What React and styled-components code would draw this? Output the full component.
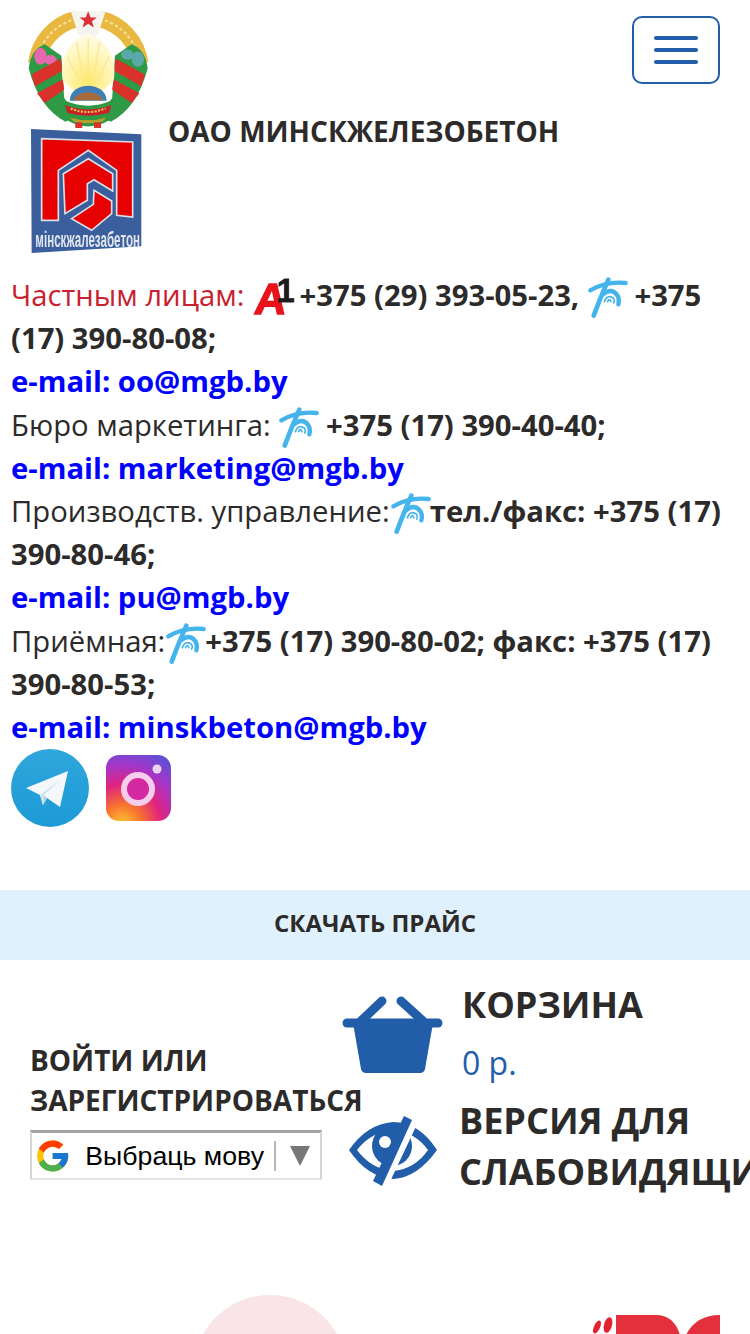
import React from "react";
import styled, { createGlobalStyle } from "styled-components";
import { FcGoogle } from "react-icons/fc";

const GlobalStyle = createGlobalStyle`
  html, body {
    margin: 0;
    padding: 0;
    background: #fff;
  }
  body {
    font-family: "Open Sans", "Liberation Sans", sans-serif;
    color: #2d2a2a;
  }
`;

const Emblem = () => (
  <svg width="120" height="120" viewBox="92 31 345 345">
    <defs>
      <filter id="soft"><feGaussianBlur stdDeviation="1.5" /></filter>
      <radialGradient id="sun" cx="50%" cy="80%" r="75%">
        <stop offset="0%" stopColor="#ffe96a" />
        <stop offset="60%" stopColor="#fff6b8" />
        <stop offset="100%" stopColor="#fffbe6" />
      </radialGradient>
    </defs>
    <g filter="url(#soft)">
      <path d="M232 62 A152 152 0 0 0 116 190" fill="none" stroke="#e9b83f" strokeWidth="48" />
      <path d="M298 62 A152 152 0 0 1 414 190" fill="none" stroke="#e9b83f" strokeWidth="48" />
      <path d="M232 62 A152 152 0 0 0 116 190" fill="none" stroke="#f9e09a" strokeWidth="6" strokeDasharray="9 7" />
      <path d="M298 62 A152 152 0 0 1 414 190" fill="none" stroke="#f9e09a" strokeWidth="6" strokeDasharray="9 7" />
      <path d="M215 40 L315 40 L292 110 L238 110 Z" fill="#f6f4ee" />
      <polygon points="265,40 272,58 290,58 276,69 281,87 265,76 249,87 254,69 240,58 258,58" fill="#d9303a" />
      <path d="M94 205 Q100 150 140 135 L188 168 L196 290 L232 340 L200 358 Q125 320 94 205 Z" fill="#2f9a45" />
      <path d="M436 205 Q430 150 390 135 L342 168 L334 290 L298 340 L330 358 Q405 320 436 205 Z" fill="#2f9a45" />
      <ellipse cx="128" cy="170" rx="18" ry="24" fill="#e668ae" />
      <ellipse cx="156" cy="180" rx="18" ry="14" fill="#e668ae" />
      <ellipse cx="378" cy="165" rx="18" ry="15" fill="#5aa8a8" />
      <ellipse cx="408" cy="178" rx="18" ry="22" fill="#5aa8a8" />
      <path d="M102 222 L186 176 L190 212 L112 256 Z" fill="#d9302c" />
      <path d="M118 276 L192 236 L196 266 L140 304 Z" fill="#d9302c" />
      <path d="M428 222 L344 176 L340 212 L418 256 Z" fill="#d9302c" />
      <path d="M412 276 L338 236 L334 266 L390 304 Z" fill="#d9302c" />
      <path d="M265 105 C318 118 350 175 338 240 L302 272 L228 272 L192 240 C180 175 212 118 265 105 Z" fill="url(#sun)" />
      <path d="M265 118 V235 M232 130 L250 235 M298 130 L280 235 M205 172 L240 240 M325 172 L290 240" stroke="#f9e896" strokeWidth="4" />
      <path d="M212 298 C212 240 318 240 318 298 Z" fill="#3f7fb5" />
      <path d="M222 296 C235 268 292 266 308 296 Z" fill="#a86a3a" />
      <path d="M160 310 L200 298 Q265 326 330 298 L372 310 Q335 366 265 372 Q195 366 160 310 Z" fill="#2f9a45" />
      <path d="M198 310 Q265 335 332 310 L325 332 Q265 350 205 332 Z" fill="#c9242a" />
      <path d="M212 346 Q265 362 318 346 L305 358 Q265 366 225 358 Z" fill="#b9a02c" />
      <path d="M215 320 Q265 340 315 320" fill="none" stroke="#e8c84a" strokeWidth="6" strokeDasharray="6 4" />
      <rect x="228" y="360" width="20" height="16" fill="#d9302c" />
      <rect x="282" y="360" width="20" height="16" fill="#d9302c" />
    </g>
  </svg>
);

const CompanyLogo = () => (
  <svg width="115" height="127" viewBox="90 383 345 381">
    <defs>
      <filter id="softLogo"><feGaussianBlur stdDeviation="1" /></filter>
    </defs>
    <g filter="url(#softLogo)">
      <polygon points="93,386 424,402 424,738 95,758" fill="#3b5f9c" />
      <polygon
        points="125,415 398,425 398,650 350,645 350,510 265,450 175,510 175,660 125,660"
        fill="#e60000"
        stroke="#d8dfe9"
        strokeWidth="5"
      />
      <polygon
        points="190,520 265,475 338,520 338,572 282,538 262,550 262,600 195,640"
        fill="#e60000"
        stroke="#d8dfe9"
        strokeWidth="5"
      />
      <polygon
        points="282,570 335,602 335,640 275,690 215,655 280,612"
        fill="#e60000"
        stroke="#d8dfe9"
        strokeWidth="5"
      />
      <text
        x="106"
        y="741"
        textLength="314"
        lengthAdjust="spacingAndGlyphs"
        fontFamily="Liberation Sans, sans-serif"
        fontWeight="700"
        fontSize="66"
        fill="#dfe5ee"
      >
        мінскжалезабетон
      </text>
    </g>
  </svg>
);

const A1Logo = () => (
  <InlineIcon viewBox="0 0 40 42" aria-hidden="true">
    <g style={{ filter: "blur(0.6px)" }}>
      <text
        x="5"
        y="39"
        transform="skewX(-7)"
        fontFamily="Liberation Sans, sans-serif"
        fontWeight="700"
        fontSize="46"
        fill="#e8141c"
        stroke="#e8141c"
        strokeWidth="1.5"
      >
        A
      </text>
      <text
        x="25"
        y="26"
        fontFamily="Liberation Sans, sans-serif"
        fontWeight="700"
        fontSize="34"
        fill="#1d1d1d"
        stroke="#1d1d1d"
        strokeWidth="0.8"
      >
        1
      </text>
    </g>
  </InlineIcon>
);

const VelcomLogo = () => (
  <InlineIcon viewBox="52 18 120 120" aria-hidden="true">
    <g fill="none" stroke="#45b4ec" strokeLinecap="round" style={{ filter: "blur(0.6px)" }}>
      <path d="M62 58 Q110 30 168 36" strokeWidth="13" />
      <path d="M116 26 Q92 80 72 134" strokeWidth="14" />
      <path d="M100 70 Q126 48 144 74 Q150 86 146 100" strokeWidth="13" />
      <path d="M104 92 Q114 68 132 82 Q136 90 132 96" strokeWidth="5" />
      <path d="M114 92 Q120 80 124 92" strokeWidth="5" />
    </g>
  </InlineIcon>
);

const TelegramIcon = () => (
  <svg width="78" height="78" viewBox="0 0 78 78">
    <defs>
      <linearGradient id="tg" x1="50%" y1="0%" x2="50%" y2="100%">
        <stop offset="0%" stopColor="#2fa6dc" />
        <stop offset="100%" stopColor="#1d9ad6" />
      </linearGradient>
    </defs>
    <circle cx="39" cy="39" r="39" fill="url(#tg)" />
    <path d="M15 39 L57 22 L49 58 L36 49 L32 56 L29 46 Z" fill="#f4f8fb" />
    <path d="M29 46 L32 56 L33 46 L50 30 Z" fill="#cfe2ee" />
    <path d="M33 46 L32 56 L36 49 Z" fill="#b5d2e2" />
  </svg>
);

const InstagramIcon = () => (
  <svg width="65" height="66" viewBox="0 0 65 66">
    <defs>
      <radialGradient id="ig" cx="25%" cy="105%" r="120%">
        <stop offset="0%" stopColor="#fdc830" />
        <stop offset="25%" stopColor="#f7722f" />
        <stop offset="50%" stopColor="#e0237f" />
        <stop offset="75%" stopColor="#a436c8" />
        <stop offset="100%" stopColor="#5b51d8" />
      </radialGradient>
    </defs>
    <rect width="65" height="66" rx="13" fill="url(#ig)" />
    <circle cx="32" cy="34" r="14" fill="#d428a0" stroke="#f6cdea" strokeWidth="6" />
    <circle cx="51" cy="14" r="4.5" fill="#ecd5f4" />
  </svg>
);

const BasketIcon = () => (
  <svg width="102" height="80" viewBox="0 0 102 80">
    <g stroke="#215da9" strokeWidth="9" strokeLinecap="round">
      <path d="M40 6 L19 26" />
      <path d="M59 6 L81 26" />
      <path d="M5 28 H96" />
    </g>
    <path d="M11 28 H91 L83 74 Q82 78 78 78 H24 Q20 78 19 74 Z" fill="#215da9" />
  </svg>
);

const EyeIcon = () => (
  <svg width="88" height="70" viewBox="0 0 88 70">
    <path
      fillRule="evenodd"
      d="M0 34 Q18 8 44 6 Q70 6 88 34 Q68 62 44 63 Q18 61 0 34 Z M8 34 Q22 16 44 14 Q66 16 79 34 Q66 53 44 55 Q22 53 8 34 Z"
      fill="#215da9"
    />
    <circle cx="43" cy="30" r="20" fill="#215da9" />
    <circle cx="36" cy="26" r="6" fill="#fff" />
    <polygon points="62,0 70,4 39,70 31,66" fill="#fff" />
    <polygon points="55,0 63,4 33,70 24,65" fill="#215da9" />
  </svg>
);

const PromoCircle = () => (
  <svg width="154" height="154" viewBox="0 0 154 154">
    <circle cx="77" cy="77" r="77" fill="#f9e5e7" />
  </svg>
);

const PromoMark = () => (
  <svg width="130" height="60" viewBox="0 0 130 60">
    <ellipse cx="7" cy="12" rx="3" ry="7" fill="#e2222e" transform="rotate(25 7 12)" />
    <ellipse cx="18" cy="10" rx="4" ry="8" fill="#e2222e" transform="rotate(15 18 10)" />
    <path d="M26 0 H66 Q84 0 90 20 V60 H26 Z" fill="#e4303c" />
    <path d="M130 0 Q106 0 96 20 V60 H130 Z" fill="#e4303c" />
  </svg>
);

const App = () => {
  return (
    <>
      <GlobalStyle />
      <Page>
        <Header>
          <Brand>
            <BrandLogos>
              <Emblem />
              <CompanyLogo />
            </BrandLogos>
            <BrandName>ОАО МИНСКЖЕЛЕЗОБЕТОН</BrandName>
          </Brand>
          <MenuButton aria-label="Меню">
            <MenuLine />
            <MenuLine />
            <MenuLine />
          </MenuButton>
        </Header>

        <Contacts>
          <Label $accent>Частным лицам:</Label> <A1Logo /> <Phone>+375 (29) 393-05-23,</Phone> <VelcomLogo />{" "}
          <Phone>+375 (17) 390-80-08;</Phone>
          <br />
          <Mail href="#">e-mail: oo@mgb.by</Mail>
          <br />
          <Label>Бюро маркетинга:</Label> <VelcomLogo /> <Phone>+375 (17) 390-40-40;</Phone>
          <br />
          <Mail href="#">e-mail: marketing@mgb.by</Mail>
          <br />
          <Label>Производств. управление:</Label>
          <VelcomLogo />
          <Phone>тел./факс: +375 (17) 390-80-46;</Phone>
          <br />
          <Mail href="#">e-mail: pu@mgb.by</Mail>
          <br />
          <Label>Приёмная:</Label>
          <VelcomLogo />
          <Phone>+375 (17) 390-80-02; факс: +375 (17) 390-80-53;</Phone>
          <br />
          <Mail href="#">e-mail: minskbeton@mgb.by</Mail>
        </Contacts>

        <Socials>
          <TelegramIcon />
          <InstagramIcon />
        </Socials>

        <PriceBar>Скачать прайс</PriceBar>

        <Account>
          <LoginColumn>
            <LoginLink>Войти или зарегистрироваться</LoginLink>
            <LangSelect>
              <FcGoogle size={40} />
              <LangText>Выбраць мову</LangText>
              <LangCaret />
            </LangSelect>
          </LoginColumn>
          <ToolsColumn>
            <CartRow>
              <BasketIcon />
              <CartText>
                <ToolTitle>Корзина</ToolTitle>
                <CartSum>0 р.</CartSum>
              </CartText>
            </CartRow>
            <VisionRow>
              <EyeIcon />
              <ToolTitle>Версия для слабовидящих</ToolTitle>
            </VisionRow>
          </ToolsColumn>
        </Account>

        <Promo>
          <PromoCircle />
          <PromoMark />
        </Promo>
      </Page>
    </>
  );
};

const Page = styled.div`
  width: 750px;
  height: 1334px;
  overflow: hidden;
`;

const Header = styled.header`
  display: flex;
  justify-content: space-between;
  align-items: flex-start;
  padding: 8px 30px 0 28px;
`;

const Brand = styled.div`
  display: flex;
  align-items: center;
  gap: 20px;
`;

const BrandLogos = styled.div`
  display: flex;
  flex-direction: column;
  align-items: flex-start;
  width: 120px;

  svg {
    display: block;
  }
  svg + svg {
    margin-left: 2px;
  }
`;

const BrandName = styled.div`
  margin-bottom: 2px;
  font-size: 28px;
  font-weight: 700;
  white-space: nowrap;
`;

const MenuButton = styled.button`
  display: flex;
  flex-direction: column;
  align-items: center;
  justify-content: center;
  gap: 8px;
  box-sizing: border-box;
  width: 88px;
  height: 68px;
  margin-top: 8px;
  padding: 0;
  background: #fff;
  border: 2px solid #215da9;
  border-radius: 10px;
`;

const MenuLine = styled.span`
  display: block;
  width: 44px;
  height: 4px;
  border-radius: 2px;
  background: #215da9;
`;

const Contacts = styled.div`
  padding: 19px 11px 0;
  font-size: 29.25px;
  line-height: 43.2px;
`;

const Label = styled.span`
  font-weight: 400;
  color: ${(p) => (p.$accent ? "#c9202f" : "#2d2a2a")};
`;

const Phone = styled.strong`
  font-weight: 700;
`;

const Mail = styled.a`
  font-weight: 700;
  color: #0000ff;
  text-decoration: none;
`;

const InlineIcon = styled.svg`
  display: inline-block;
  width: 40px;
  height: 40px;
  overflow: visible;
  vertical-align: middle;
  margin: -6px 0 -4px;
`;

const Socials = styled.div`
  display: flex;
  align-items: center;
  gap: 17px;
  padding: 0 11px;
`;

const PriceBar = styled.div`
  margin-top: 63px;
  height: 70px;
  line-height: 66px;
  background: #dff1fd;
  text-align: center;
  font-size: 24px;
  font-weight: 700;
  text-transform: uppercase;
`;

const Account = styled.section`
  display: grid;
  grid-template-columns: 342px 1fr;
  height: 250px;
`;

const LoginColumn = styled.div`
  padding: 80px 0 0 30px;
  min-width: 0;
`;

const LoginLink = styled.div`
  font-size: 28px;
  line-height: 40px;
  font-weight: 700;
  text-transform: uppercase;
  width: 340px;
`;

const LangSelect = styled.div`
  display: flex;
  align-items: center;
  box-sizing: border-box;
  width: 292px;
  height: 50px;
  margin-top: 10px;
  padding: 0 10px 0 2px;
  background: #fff;
  border: 2px solid #d5d5d5;
  border-top: 3px solid #a3a3a3;
  border-bottom-color: #e5e5e5;
`;

const LangText = styled.span`
  margin-left: 14px;
  padding-right: 10px;
  border-right: 2px solid #b5b5b5;
  font-family: "Liberation Sans", Arial, sans-serif;
  font-size: 26.7px;
  line-height: 30px;
  color: #000;
  white-space: nowrap;
`;

const LangCaret = styled.span`
  margin-left: 14px;
  width: 0;
  height: 0;
  border-left: 10px solid transparent;
  border-right: 10px solid transparent;
  border-top: 20px solid #777;
`;

const ToolsColumn = styled.div`
  display: flex;
  flex-direction: column;
  min-width: 0;
  padding-top: 19px;
`;

const CartRow = styled.div`
  display: flex;
  align-items: flex-start;
  gap: 18px;

  > svg {
    margin-top: 16px;
    flex-shrink: 0;
  }
`;

const CartText = styled.div`
  display: flex;
  flex-direction: column;
`;

const ToolTitle = styled.div`
  font-size: 36px;
  line-height: 51px;
  font-weight: 700;
  text-transform: uppercase;
`;

const CartSum = styled.div`
  margin-top: 3px;
  font-size: 32px;
  line-height: 60px;
  color: #215da9;
`;

const VisionRow = styled.div`
  display: flex;
  align-items: center;
  gap: 22px;
  margin-top: 2px;
  padding-left: 7px;
  width: 560px;

  > svg {
    flex-shrink: 0;
    margin-top: 10px;
  }
`;

const Promo = styled.div`
  display: flex;
  justify-content: space-between;
  align-items: flex-start;
  padding: 85px 30px 0 193px;

  svg:last-child {
    margin-top: 20px;
  }
`;

export default App;
